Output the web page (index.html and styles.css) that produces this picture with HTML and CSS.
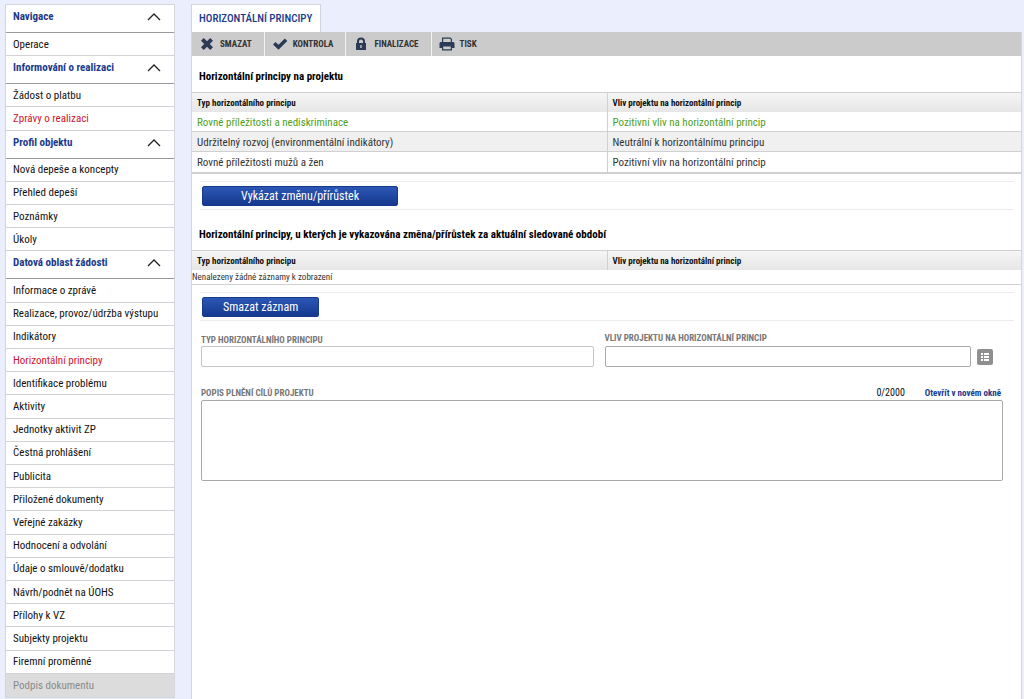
FILE: index.html
```html
<!DOCTYPE html>
<html lang="cs">
<head>
<meta charset="utf-8">
<title>Horizontální principy</title>
<link rel="stylesheet" href="styles.css">
</head>
<body>
<div class="page">
  <nav class="sidebar" aria-label="Hlavní navigace">
    <button class="group" type="button">Navigace<svg class="chevron" viewBox="0 0 14 8"><path d="M1 7l6-6 6 6"/></svg></button>
    <a class="item" href="#">Operace</a>
    <button class="group" type="button">Informování o realizaci<svg class="chevron" viewBox="0 0 14 8"><path d="M1 7l6-6 6 6"/></svg></button>
    <a class="item" href="#">Žádost o platbu</a>
    <a class="item active" href="#">Zprávy o realizaci</a>
    <button class="group" type="button">Profil objektu<svg class="chevron" viewBox="0 0 14 8"><path d="M1 7l6-6 6 6"/></svg></button>
    <a class="item" href="#">Nová depeše a koncepty</a>
    <a class="item" href="#">Přehled depeší</a>
    <a class="item" href="#">Poznámky</a>
    <a class="item" href="#">Úkoly</a>
    <button class="group" type="button">Datová oblast žádosti<svg class="chevron" viewBox="0 0 14 8"><path d="M1 7l6-6 6 6"/></svg></button>
    <a class="item" href="#">Informace o zprávě</a>
    <a class="item" href="#">Realizace, provoz/údržba výstupu</a>
    <a class="item" href="#">Indikátory</a>
    <a class="item active" href="#">Horizontální principy</a>
    <a class="item" href="#">Identifikace problému</a>
    <a class="item" href="#">Aktivity</a>
    <a class="item" href="#">Jednotky aktivit ZP</a>
    <a class="item" href="#">Čestná prohlášení</a>
    <a class="item" href="#">Publicita</a>
    <a class="item" href="#">Přiložené dokumenty</a>
    <a class="item" href="#">Veřejné zakázky</a>
    <a class="item" href="#">Hodnocení a odvolání</a>
    <a class="item" href="#">Údaje o smlouvě/dodatku</a>
    <a class="item" href="#">Návrh/podnět na ÚOHS</a>
    <a class="item" href="#">Přílohy k VZ</a>
    <a class="item" href="#">Subjekty projektu</a>
    <a class="item" href="#">Firemní proměnné</a>
    <a class="item disabled" aria-disabled="true" href="#">Podpis dokumentu</a>
  </nav>
  <main class="main">
    <h1 class="tab">HORIZONTÁLNÍ PRINCIPY</h1>
    <div class="panel">
      <div class="toolbar">
        <button class="tool" type="button"><svg class="tool-icon" viewBox="0 0 16 16"><path d="M4.800 2L8 5.200 11.200 2 14 4.800 10.800 8 14 11.200 11.200 14 8 10.800 4.800 14 2 11.200 5.200 8 2 4.800z"/></svg>SMAZAT</button>
        <button class="tool" type="button"><svg class="tool-icon" viewBox="0 0 16 16"><path d="M1 8.500L3.500 6 6.500 8.800 12.800 2.500 15.300 5 6.500 13.800z"/></svg>KONTROLA</button>
        <button class="tool" type="button"><svg class="tool-icon" viewBox="0 0 16 16"><path fill-rule="evenodd" d="M4 7V5.500a4 4 0 0 1 8 0V7h1v7H3V7zM6 7h4V5.500a2 2 0 0 0-4 0zM7.300 9v3h1.400V9z"/></svg>FINALIZACE</button>
        <button class="tool" type="button"><svg class="tool-icon" viewBox="0 0 16 16"><path fill-rule="evenodd" d="M3 1.500h8.500L13 3v3h1.500l1 1v5H13v2.500H3V12H.5V7l1-1H3zM4.200 2.700V6h7.600V3.500L11 2.700zM4.200 10.500v2.800h7.600v-2.800z"/></svg>TISK</button>
      </div>
      <h2 class="title">Horizontální principy na projektu</h2>
      <table class="grid">
        <thead><tr><th>Typ horizontálního principu</th><th>Vliv projektu na horizontální princip</th></tr></thead>
        <tbody>
          <tr class="selected"><td>Rovné příležitosti a nediskriminace</td><td>Pozitivní vliv na horizontální princip</td></tr>
          <tr class="alt"><td>Udržitelný rozvoj (environmentální indikátory)</td><td>Neutrální k horizontálnímu principu</td></tr>
          <tr><td>Rovné příležitosti mužů a žen</td><td>Pozitivní vliv na horizontální princip</td></tr>
        </tbody>
      </table>
      <div class="actions"><button class="primary wide" type="button">Vykázat změnu/přírůstek</button></div>
      <h2 class="title second">Horizontální principy, u kterých je vykazována změna/přírůstek za aktuální sledované období</h2>
      <table class="grid empty">
        <thead><tr><th>Typ horizontálního principu</th><th>Vliv projektu na horizontální princip</th></tr></thead>
        <tbody><tr><td colspan="2">Nenalezeny žádné záznamy k zobrazení</td></tr></tbody>
      </table>
      <div class="actions"><button class="primary" type="button">Smazat záznam</button></div>
      <form class="form">
        <div class="fields">
          <div class="field">
            <label for="typ">TYP HORIZONTÁLNÍHO PRINCIPU</label>
            <input class="box light" id="typ" type="text">
          </div>
          <div class="field picker">
            <label for="vliv">VLIV PROJEKTU NA HORIZONTÁLNÍ PRINCIP</label>
            <div class="pick-row">
              <input class="box" id="vliv" type="text">
              <button class="pick" type="button" aria-label="Vybrat ze seznamu"><svg viewBox="0 0 16 16"><path d="M4 4h2v2H4zM7 4h5v2H7zM4 7h2v2H4zM7 7h5v2H7zM4 10h2v2H4zM7 10h5v2H7z"/></svg></button>
            </div>
          </div>
        </div>
        <div class="text-head">
          <label for="popis">POPIS PLNĚNÍ CÍLŮ PROJEKTU</label>
          <span class="counter">0/2000</span>
          <a class="open" href="#">Otevřít v novém okně</a>
        </div>
        <textarea class="area" id="popis"></textarea>
      </form>
    </div>
  </main>
</div>
</body>
</html>
```
FILE: styles.css
```css
* { box-sizing: border-box; }
body {
  margin: 0;
  background: #ebeffd;
  color: #111;
  font: 11px/14px "Roboto Condensed", "Liberation Sans Narrow", Roboto, sans-serif;
}
button, input, textarea { font: inherit; color: inherit; margin: 0; }
a { text-decoration: none; }
.page { display: flex; gap: 16px; min-height: 100vh; padding: 4px 2px 0 5px; }

.sidebar {
  display: flex;
  flex-direction: column;
  width: 170px;
  flex: none;
  margin-bottom: 1px;
  background: #fff;
  border: 1px solid #d3d5dc;
}
.group {
  display: flex;
  flex: none;
  align-items: center;
  justify-content: space-between;
  height: 28px;
  padding: 0 13px 3px 7px;
  border: 0;
  border-bottom: 1px solid #999;
  background: none;
  color: #1b3a8c;
  font-weight: 700;
}
.chevron { width: 14px; height: 8px; fill: none; stroke: #222; stroke-width: 1.3; }
.item {
  display: flex;
  flex: 1 0 23px;
  align-items: center;
  padding: 1px 7px 0;
  border-bottom: 1px solid #d3d3d3;
  color: #111;
  white-space: nowrap;
}
.item.active { color: #d0142c; }
.item.disabled { background: #dcdcdc; color: #8a8a8a; border-bottom: 0; }

.main { display: flex; flex-direction: column; flex: 1; min-width: 0; }
.tab {
  align-self: flex-start;
  margin: 0;
  padding: 7px 8px 7px 7px;
  height: 28px;
  background: #fff;
  border: 1px solid #d3d5dc;
  border-bottom: 0;
  color: #1b3a8c;
  font-size: 11px;
  font-weight: 500;
}
.panel { flex: 1; background: #fff; border: solid #d3d5e4; border-width: 0 1px; }
.toolbar { display: flex; height: 24px; background: #cbcbcb; }
.tool {
  display: flex;
  align-items: center;
  gap: 5px;
  padding: 0 12px 0 7px;
  border: 0;
  border-right: 1px solid #f2f2f2;
  background: none;
  color: #333;
  font-size: 9px;
  font-weight: 700;
}
.tool:last-child { border-right: 0; }
.tool-icon { width: 16px; height: 16px; fill: #2b3b55; }

.title { margin: 0; padding: 14px 7px 8px; font-size: 11px; line-height: 14px; font-weight: 700; color: #000; }
.title.second { padding-top: 18px; }
.grid { width: 100%; border-collapse: separate; border-spacing: 0; table-layout: fixed; border-bottom: 2px solid #d0d0d0; color: #333; }
.grid th, .grid td { padding: 0 5px; text-align: left; }
.grid th + th, .grid td + td { border-left: 1px solid #d0d0d0; }
.grid th {
  height: 20px;
  border-top: 1px solid #d0d0d0;
  background: linear-gradient(#f5f5f5, #e6e6e6);
  color: #111;
  font-size: 9px;
  font-weight: 700;
}
.grid td { height: 20px; padding-top: 2px; border-bottom: 1px solid #d0d0d0; font-size: 11px; }
.grid tr:last-child td { border-bottom: 0; }
.grid .selected { color: #4fa01e; }
.grid .alt { background: #f0f0f0; }
.grid.empty { border-bottom-width: 1px; }
.grid.empty td { height: 14px; padding: 0; font-size: 9px; }

.actions { margin: 7px 7px 0 8px; padding: 4px 2px 3px; border: solid #ececec; border-width: 1px 0; }
.primary {
  display: block;
  height: 20px;
  padding: 0 20px;
  border: 1px solid #17398a;
  border-radius: 2px;
  background: linear-gradient(#2b57b5, #16398f);
  color: #fff;
  font-size: 12px;
  line-height: 18px;
}
.primary.wide { padding: 0 38px; }

.form { padding: 11px 18px 0 9px; }
label { color: #777; font-size: 9px; line-height: 12px; font-weight: 700; }
.fields { display: grid; grid-template-columns: 1fr 1fr; gap: 11px; align-items: end; padding-right: 6px; }
.field { display: flex; flex-direction: column; }
.picker { gap: 2px; }
.pick-row { display: flex; align-items: center; gap: 6px; padding-right: 4px; }
.box { width: 100%; height: 21px; border: 1px solid #aaa; border-radius: 2px; background: #fff; }
.box.light { border-color: #c4c4c4; }
.pick { flex: none; width: 16px; height: 16px; padding: 0; border: 0; border-radius: 2px; background: #8f8f8f; }
.pick svg { display: block; fill: #fff; }
.text-head { display: flex; align-items: center; padding: 19px 2px 0 0; }
.counter { margin-left: auto; font-size: 10px; }
.open { margin-left: 20px; color: #1b3a8c; font-size: 9px; font-weight: 700; }
.area { display: block; width: 100%; height: 81px; border: 1px solid #aaa; border-radius: 2px; background: #fff; resize: none; }
```
